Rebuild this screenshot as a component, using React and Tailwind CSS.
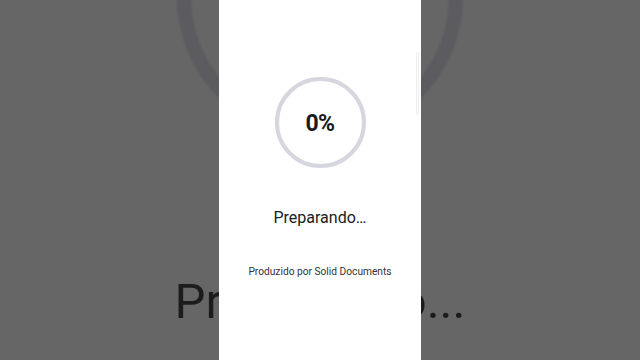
export default function App() {
  return (
    <div className="relative w-[640px] h-[360px] overflow-hidden bg-[#666666] font-['Roboto','Liberation_Sans',sans-serif]">
      {/* blurred backdrop copy of the dialog */}
      <div className="absolute left-[177px] top-[-146px] w-[286px] h-[286px] rounded-full border-[14px] border-[#5b5b60] blur-[1px]" />
      <div className="absolute left-0 right-0 top-[272px] text-center text-[49px] leading-[60px] text-[#1c1c1c] blur-[0.6px]">
        Preparando...
      </div>

      <div className="relative flex justify-center h-full">
        <div className="relative w-[202px] h-full bg-white flex flex-col items-center">
          <div className="mt-[77px] w-[91px] h-[91px] rounded-full border-[4px] border-[#d6d6de] flex items-center justify-center">
            <span className="mt-[3px] text-[23px] font-bold text-[#1a1a1a] tracking-tight">0%</span>
          </div>
          <p className="mt-[40px] text-[16px] leading-5 text-[#202020]">Preparando…</p>
          <p className="mt-[36px] text-[10.2px] leading-4 text-[#333333]">Produzido por Solid Documents</p>
          <div className="absolute right-[2px] top-[52px] w-[3px] h-[63px] rounded-full border border-[#eeeeee]" />
        </div>
      </div>
    </div>
  );
}
